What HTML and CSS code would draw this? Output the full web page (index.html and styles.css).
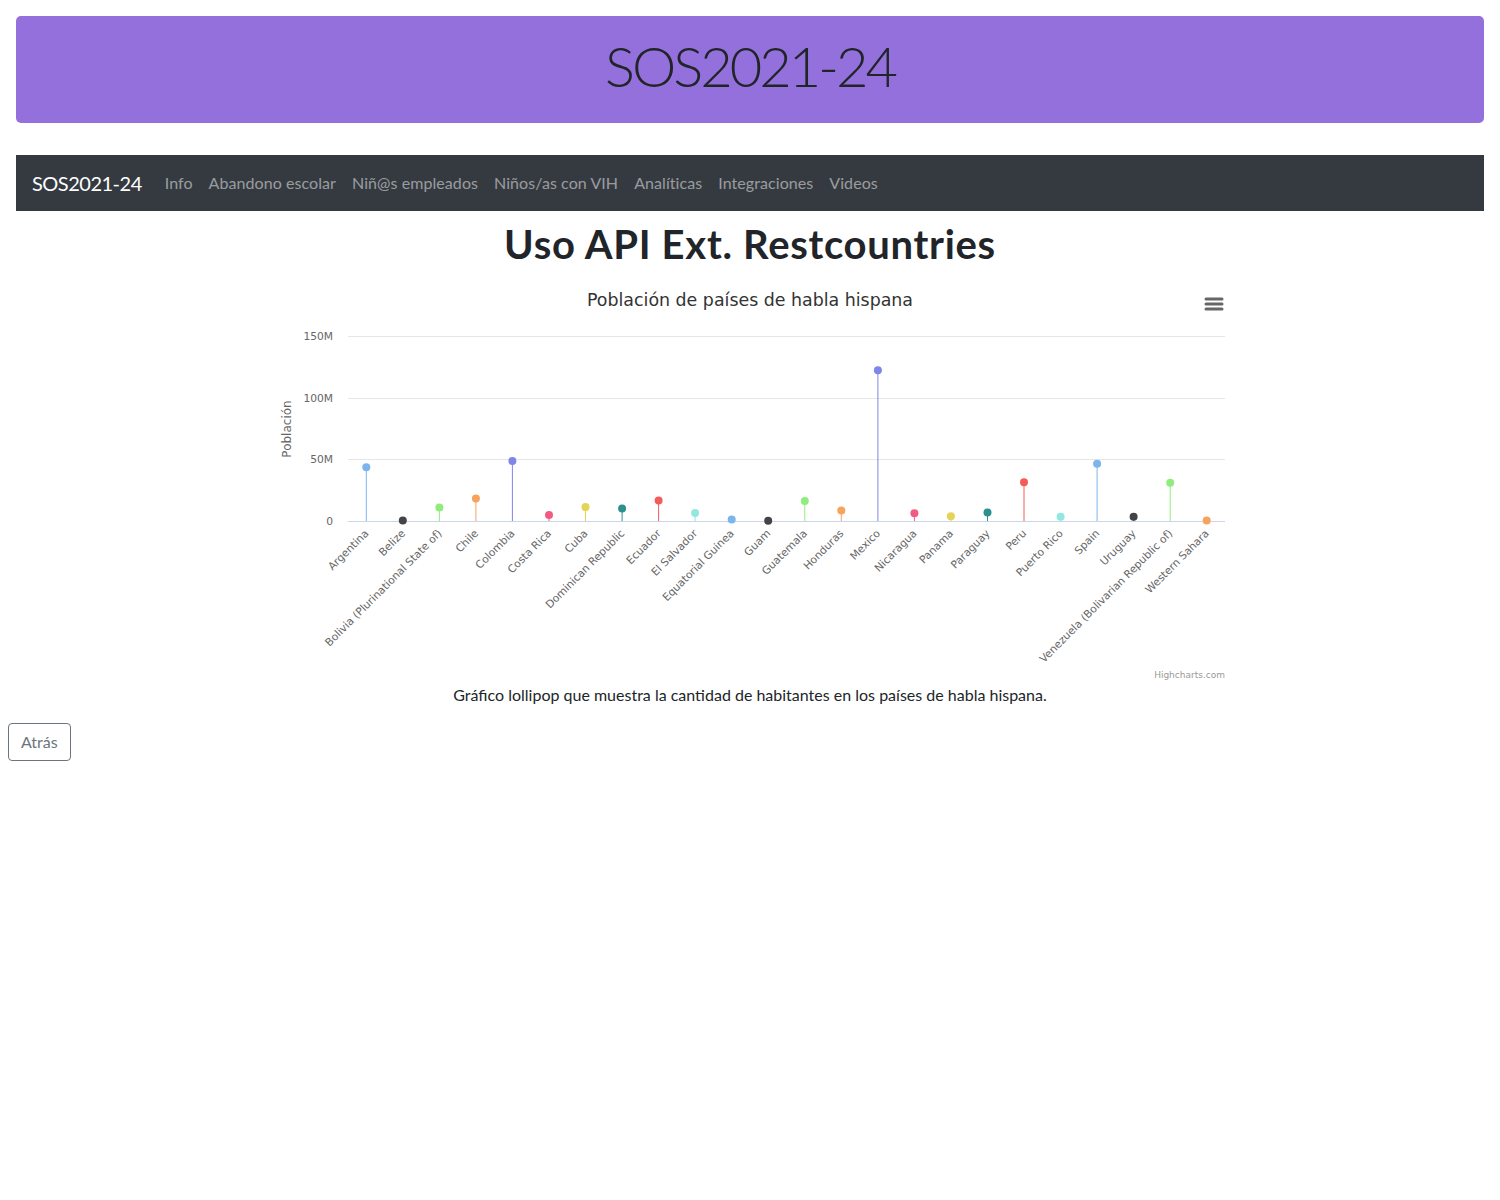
FILE: index.html
```html
<!DOCTYPE html>
<html lang="es">
<head>
<meta charset="utf-8">
<title>SOS2021-24</title>
<link rel="stylesheet" href="styles.css">
</head>
<body>
<header class="banner">
  <h1 class="banner-title">SOS2021-24</h1>
</header>
<nav class="navbar">
  <a class="brand" href="#">SOS2021-24</a>
  <a class="nav-link" href="#">Info</a>
  <a class="nav-link" href="#">Abandono escolar</a>
  <a class="nav-link" href="#">Niñ@s empleados</a>
  <a class="nav-link" href="#">Niños/as con VIH</a>
  <a class="nav-link" href="#">Analíticas</a>
  <a class="nav-link" href="#">Integraciones</a>
  <a class="nav-link" href="#">Videos</a>
</nav>
<main>
  <h2 class="page-title">Uso API Ext. Restcountries</h2>
  <figure class="figure">
    <div class="chart">
      <svg class="chart-svg" width="970" height="400" viewBox="0 0 970 400" xmlns="http://www.w3.org/2000/svg">
        <text class="c-title" x="485" y="24" text-anchor="middle">Población de países de habla hispana</text>
        <g class="c-menu">
          <line x1="941" y1="17" x2="957" y2="17"/>
          <line x1="941" y1="22" x2="957" y2="22"/>
          <line x1="941" y1="27" x2="957" y2="27"/>
        </g>
        <g class="c-grid">
          <line x1="83" y1="54.5" x2="960" y2="54.5"/>
          <line x1="83" y1="116.5" x2="960" y2="116.5"/>
          <line x1="83" y1="177.5" x2="960" y2="177.5"/>
        </g>
        <line class="c-axis" x1="83" y1="239.5" x2="960" y2="239.5"/>
        <g class="c-ylab" text-anchor="end">
          <text x="68" y="58">150M</text>
          <text x="68" y="120">100M</text>
          <text x="68" y="181">50M</text>
          <text x="68" y="243">0</text>
        </g>
        <text class="c-ytitle" x="26" y="147" text-anchor="middle" transform="rotate(-90 26 147)">Población</text>
        <g class="c-stems">
          <line x1="101.3" y1="185.2" x2="101.3" y2="239" stroke="#7cb5ec"/>
          <line x1="137.8" y1="238.5" x2="137.8" y2="239" stroke="#434348"/>
          <line x1="174.4" y1="225.5" x2="174.4" y2="239" stroke="#90ed7d"/>
          <line x1="210.9" y1="216.6" x2="210.9" y2="239" stroke="#f7a35c"/>
          <line x1="247.4" y1="178.9" x2="247.4" y2="239" stroke="#8085e9"/>
          <line x1="284.0" y1="233.0" x2="284.0" y2="239" stroke="#f15c80"/>
          <line x1="320.5" y1="225.1" x2="320.5" y2="239" stroke="#e4d354"/>
          <line x1="357.1" y1="226.6" x2="357.1" y2="239" stroke="#2b908f"/>
          <line x1="393.6" y1="218.6" x2="393.6" y2="239" stroke="#f45b5b"/>
          <line x1="430.1" y1="231.0" x2="430.1" y2="239" stroke="#91e8e1"/>
          <line x1="466.7" y1="237.5" x2="466.7" y2="239" stroke="#7cb5ec"/>
          <line x1="503.2" y1="238.8" x2="503.2" y2="239" stroke="#434348"/>
          <line x1="539.8" y1="219.1" x2="539.8" y2="239" stroke="#90ed7d"/>
          <line x1="576.3" y1="228.4" x2="576.3" y2="239" stroke="#f7a35c"/>
          <line x1="612.9" y1="88.2" x2="612.9" y2="239" stroke="#8085e9"/>
          <line x1="649.4" y1="231.3" x2="649.4" y2="239" stroke="#f15c80"/>
          <line x1="685.9" y1="234.3" x2="685.9" y2="239" stroke="#e4d354"/>
          <line x1="722.5" y1="230.6" x2="722.5" y2="239" stroke="#2b908f"/>
          <line x1="759.0" y1="200.2" x2="759.0" y2="239" stroke="#f45b5b"/>
          <line x1="795.6" y1="234.7" x2="795.6" y2="239" stroke="#91e8e1"/>
          <line x1="832.1" y1="181.7" x2="832.1" y2="239" stroke="#7cb5ec"/>
          <line x1="868.6" y1="234.7" x2="868.6" y2="239" stroke="#434348"/>
          <line x1="905.2" y1="200.7" x2="905.2" y2="239" stroke="#90ed7d"/>
          <line x1="941.7" y1="238.4" x2="941.7" y2="239" stroke="#f7a35c"/>
        </g>
        <g class="c-dots">
          <circle cx="101.3" cy="185.2" r="4" fill="#7cb5ec"/>
          <circle cx="137.8" cy="238.5" r="4" fill="#434348"/>
          <circle cx="174.4" cy="225.5" r="4" fill="#90ed7d"/>
          <circle cx="210.9" cy="216.6" r="4" fill="#f7a35c"/>
          <circle cx="247.4" cy="178.9" r="4" fill="#8085e9"/>
          <circle cx="284.0" cy="233.0" r="4" fill="#f15c80"/>
          <circle cx="320.5" cy="225.1" r="4" fill="#e4d354"/>
          <circle cx="357.1" cy="226.6" r="4" fill="#2b908f"/>
          <circle cx="393.6" cy="218.6" r="4" fill="#f45b5b"/>
          <circle cx="430.1" cy="231.0" r="4" fill="#91e8e1"/>
          <circle cx="466.7" cy="237.5" r="4" fill="#7cb5ec"/>
          <circle cx="503.2" cy="238.8" r="4" fill="#434348"/>
          <circle cx="539.8" cy="219.1" r="4" fill="#90ed7d"/>
          <circle cx="576.3" cy="228.4" r="4" fill="#f7a35c"/>
          <circle cx="612.9" cy="88.2" r="4" fill="#8085e9"/>
          <circle cx="649.4" cy="231.3" r="4" fill="#f15c80"/>
          <circle cx="685.9" cy="234.3" r="4" fill="#e4d354"/>
          <circle cx="722.5" cy="230.6" r="4" fill="#2b908f"/>
          <circle cx="759.0" cy="200.2" r="4" fill="#f45b5b"/>
          <circle cx="795.6" cy="234.7" r="4" fill="#91e8e1"/>
          <circle cx="832.1" cy="181.7" r="4" fill="#7cb5ec"/>
          <circle cx="868.6" cy="234.7" r="4" fill="#434348"/>
          <circle cx="905.2" cy="200.7" r="4" fill="#90ed7d"/>
          <circle cx="941.7" cy="238.4" r="4" fill="#f7a35c"/>
        </g>
        <g class="c-xlab" text-anchor="end">
          <text x="104.3" y="252" transform="rotate(-45 104.3 252)">Argentina</text>
          <text x="140.8" y="252" transform="rotate(-45 140.8 252)">Belize</text>
          <text x="177.4" y="252" transform="rotate(-45 177.4 252)">Bolivia (Plurinational State of)</text>
          <text x="213.9" y="252" transform="rotate(-45 213.9 252)">Chile</text>
          <text x="250.4" y="252" transform="rotate(-45 250.4 252)">Colombia</text>
          <text x="287.0" y="252" transform="rotate(-45 287.0 252)">Costa Rica</text>
          <text x="323.5" y="252" transform="rotate(-45 323.5 252)">Cuba</text>
          <text x="360.1" y="252" transform="rotate(-45 360.1 252)">Dominican Republic</text>
          <text x="396.6" y="252" transform="rotate(-45 396.6 252)">Ecuador</text>
          <text x="433.1" y="252" transform="rotate(-45 433.1 252)">El Salvador</text>
          <text x="469.7" y="252" transform="rotate(-45 469.7 252)">Equatorial Guinea</text>
          <text x="506.2" y="252" transform="rotate(-45 506.2 252)">Guam</text>
          <text x="542.8" y="252" transform="rotate(-45 542.8 252)">Guatemala</text>
          <text x="579.3" y="252" transform="rotate(-45 579.3 252)">Honduras</text>
          <text x="615.9" y="252" transform="rotate(-45 615.9 252)">Mexico</text>
          <text x="652.4" y="252" transform="rotate(-45 652.4 252)">Nicaragua</text>
          <text x="688.9" y="252" transform="rotate(-45 688.9 252)">Panama</text>
          <text x="725.5" y="252" transform="rotate(-45 725.5 252)">Paraguay</text>
          <text x="762.0" y="252" transform="rotate(-45 762.0 252)">Peru</text>
          <text x="798.6" y="252" transform="rotate(-45 798.6 252)">Puerto Rico</text>
          <text x="835.1" y="252" transform="rotate(-45 835.1 252)">Spain</text>
          <text x="871.6" y="252" transform="rotate(-45 871.6 252)">Uruguay</text>
          <text x="908.2" y="252" transform="rotate(-45 908.2 252)">Venezuela (Bolivarian Republic of)</text>
          <text x="944.7" y="252" transform="rotate(-45 944.7 252)">Western Sahara</text>
        </g>
        <text class="c-credits" x="960" y="396" text-anchor="end">Highcharts.com</text>
      </svg>
    </div>
    <figcaption class="caption">Gráfico lollipop que muestra la cantidad de habitantes en los países de habla hispana.</figcaption>
  </figure>
</main>
<button class="btn-back" type="button">Atrás</button>
</body>
</html>
```
FILE: styles.css
```css
* { box-sizing: border-box; }
body {
  margin: 8px;
  font-family: Lato, "Open Sans", sans-serif;
  font-size: 16px;
  line-height: 1.5;
  color: #212529;
  background: #fff;
}
.banner {
  margin: 8px 8px 32px;
  background: #9370db;
  border-radius: 5px;
  padding: 16px 16px 24px;
  text-align: center;
}
.banner-title {
  margin: 0;
  font-size: 56px;
  font-weight: 300;
  line-height: 1.2;
  letter-spacing: -3px;
  color: #212529;
}
.navbar {
  margin: 0 8px;
  background: #343a40;
  display: flex;
  align-items: center;
  padding: 8px 16px;
  height: 56px;
}
.brand {
  color: #fff;
  font-size: 20px;
  line-height: 30px;
  padding: 5px 0;
  margin-right: 15px;
  letter-spacing: -0.5px;
  text-decoration: none;
}
.nav-link {
  color: rgba(255, 255, 255, 0.5);
  text-decoration: none;
  padding: 8px;
  line-height: 24px;
  letter-spacing: 0.07px;
}
.page-title {
  margin: 9px 0 14px;
  text-align: center;
  font-size: 40px;
  font-weight: 700;
  line-height: 1.2;
  letter-spacing: 0.7px;
}
.figure { margin: 0; }
.chart {
  width: 970px;
  height: 400px;
  margin: 0 auto;
}
.chart-svg {
  display: block;
  font-family: "DejaVu Sans", "Open Sans", sans-serif;
}
.c-title { font-size: 17.4px; fill: #333333; }
.c-menu line { stroke: #666666; stroke-width: 3; stroke-linecap: round; }
.c-grid line { stroke: #e6e6e6; stroke-width: 1; }
.c-axis { stroke: #ccd6eb; stroke-width: 1; }
.c-ylab text, .c-xlab text { font-size: 10.7px; fill: #666666; }
.c-ytitle { font-size: 12px; fill: #666666; }
.c-stems line { stroke-width: 1; }
.c-credits { font-size: 9px; fill: #999999; }
.caption {
  margin: 1px 0 16px;
  text-align: center;
  font-size: 16px;
  line-height: 24px;
}
.btn-back {
  display: inline-block;
  font-family: inherit;
  font-size: 16px;
  line-height: 24px;
  padding: 6px 12px;
  color: #6c757d;
  background: transparent;
  border: 1px solid #6c757d;
  border-radius: 4px;
}
```
